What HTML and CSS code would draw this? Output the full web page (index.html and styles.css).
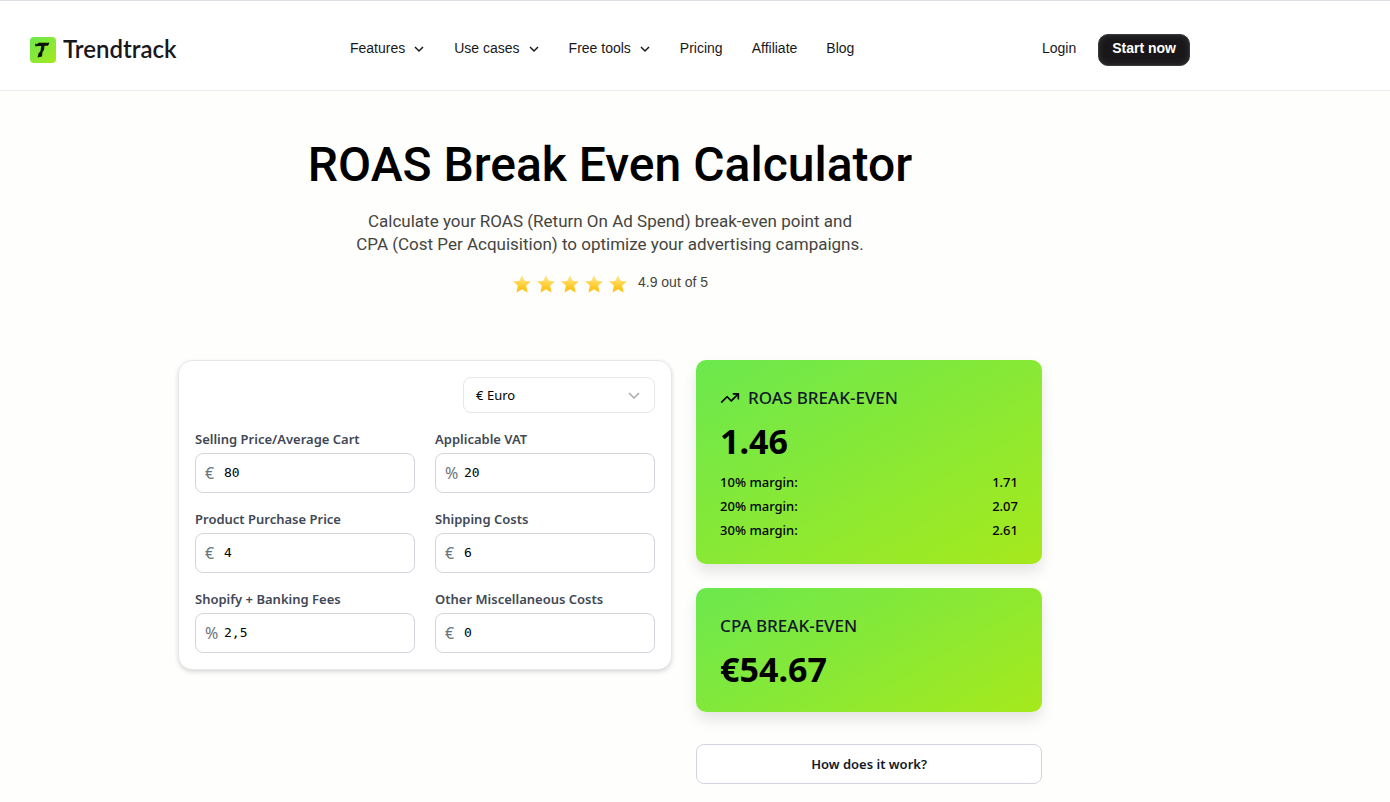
FILE: index.html
```html
<!DOCTYPE html>
<html lang="en">
<head>
  <meta charset="UTF-8" />
  <meta name="viewport" content="width=device-width, initial-scale=1.0" />
  <title>ROAS Break Even Calculator - Trendtrack</title>
  <link rel="stylesheet" href="styles.css">
</head>
<body>
  <header class="site-header">
    <div class="header-inner">
      <a class="logo" href="#">
        <svg width="26" height="26" viewBox="0 0 26 26" aria-hidden="true">
          <defs>
            <linearGradient id="logo-bg" x1="0" y1="0" x2="1" y2="1">
              <stop offset="0" stop-color="#6be84e" />
              <stop offset="1" stop-color="#a6e91c" />
            </linearGradient>
          </defs>
          <rect width="26" height="26" rx="4" fill="url(#logo-bg)" />
          <path d="M5.500 9.500L5 6.500l2 .8 1.500-1.500h11L18 8.800h-3.500L14 13l-1.500 2-.5 4.500L7.500 20.500l1-4 2-2.500.7-5H8z" fill="#0b120b" />
        </svg>
        <span>Trendtrack</span>
      </a>

      <nav class="main-nav">
        <button type="button">Features
          <svg class="chevron" viewBox="0 0 12 6"><path d="M2 1l4 4 4-4" /></svg>
        </button>
        <button type="button">Use cases
          <svg class="chevron" viewBox="0 0 12 6"><path d="M2 1l4 4 4-4" /></svg>
        </button>
        <button type="button">Free tools
          <svg class="chevron" viewBox="0 0 12 6"><path d="M2 1l4 4 4-4" /></svg>
        </button>
        <a href="#">Pricing</a>
        <a href="#">Affiliate</a>
        <a href="#">Blog</a>
      </nav>

      <div class="account">
        <a href="#">Login</a>
        <a class="start-btn" href="#">Start now</a>
      </div>
    </div>
  </header>

  <main class="page">
    <section class="hero">
      <h1>ROAS Break Even Calculator</h1>
      <p class="subtitle">
        Calculate your ROAS (Return On Ad Spend) break-even point and<br>
        CPA (Cost Per Acquisition) to optimize your advertising campaigns.
      </p>
      <div class="rating">
        <svg class="stars" width="116" height="20" viewBox="0 0 116 20" aria-hidden="true">
          <defs>
            <linearGradient id="star-fill" x1="0" y1="0" x2="0" y2="1">
              <stop offset="0" stop-color="#ffe9a0" />
              <stop offset="0.6" stop-color="#ffcd33" />
              <stop offset="1" stop-color="#ffc008" />
            </linearGradient>
            <path id="star" d="M10 1l2.600 5.700 6.200.7-4.600 4.200 1.300 6.900-5.500-3.300-5.500 3.300 1.300-6.900L1.200 7.400l6.200-.7z" fill="url(#star-fill)" />
          </defs>
          <use href="#star" />
          <use href="#star" x="24" />
          <use href="#star" x="48" />
          <use href="#star" x="72" />
          <use href="#star" x="96" />
        </svg>
        <span>4.9 out of 5</span>
      </div>
    </section>

    <div class="calculator">
      <form class="form-card">
        <div class="currency">
          <select id="currency" aria-label="Currency">
            <option>€ Euro</option>
            <option>$ Dollar</option>
            <option>£ Pound</option>
          </select>
          <svg class="chevron" viewBox="0 0 12 6"><path d="M1 1l5 5 5-5" /></svg>
        </div>

        <div class="fields">
          <div class="field">
            <label for="price">Selling Price/Average Cart</label>
            <div class="input-box"><span>€</span><input id="price" type="text" value="80"></div>
          </div>
          <div class="field">
            <label for="vat">Applicable VAT</label>
            <div class="input-box"><span>%</span><input id="vat" type="text" value="20"></div>
          </div>
          <div class="field">
            <label for="purchase">Product Purchase Price</label>
            <div class="input-box"><span>€</span><input id="purchase" type="text" value="4"></div>
          </div>
          <div class="field">
            <label for="shipping">Shipping Costs</label>
            <div class="input-box"><span>€</span><input id="shipping" type="text" value="6"></div>
          </div>
          <div class="field">
            <label for="fees">Shopify + Banking Fees</label>
            <div class="input-box"><span>%</span><input id="fees" type="text" value="2,5"></div>
          </div>
          <div class="field">
            <label for="misc">Other Miscellaneous Costs</label>
            <div class="input-box"><span>€</span><input id="misc" type="text" value="0"></div>
          </div>
        </div>
      </form>

      <div class="results">
        <section class="result-card">
          <h2>
            <svg class="trend" viewBox="0 0 24 24" aria-hidden="true">
              <path d="M22 7l-8.500 8.500-5-5L2 17" />
              <path d="M16 7h6v6" />
            </svg>
            ROAS BREAK-EVEN
          </h2>
          <p class="value">1.46</p>
          <dl class="margins">
            <div><dt>10% margin:</dt><dd>1.71</dd></div>
            <div><dt>20% margin:</dt><dd>2.07</dd></div>
            <div><dt>30% margin:</dt><dd>2.61</dd></div>
          </dl>
        </section>

        <section class="result-card">
          <h2>CPA BREAK-EVEN</h2>
          <p class="value">€54.67</p>
        </section>

        <button class="help-btn" type="button">How does it work?</button>
      </div>
    </div>
  </main>
</body>
</html>
```
FILE: styles.css
```css
* {
  box-sizing: border-box;
}
body {
  margin: 0;
  background: #fefefc;
  color: #000;
  font-family: "Noto Sans", "Open Sans", sans-serif;
  font-size: 14px;
  line-height: 20px;
}
h1, h2, p, dl, dd {
  margin: 0;
}
a {
  color: inherit;
  text-decoration: none;
}
button, input, select {
  font: inherit;
  color: inherit;
}

/* header */
.site-header {
  background: #fff;
  border-top: 1px solid #dcdfe3;
  border-bottom: 1px solid #ececef;
  font-family: "Liberation Sans", Arial, sans-serif;
  color: #18181b;
}
.header-inner {
  display: grid;
  grid-template-columns: 320px 1fr auto;
  align-items: center;
  max-width: 1220px;
  height: 89px;
  padding: 0 30px;
}
.logo {
  display: flex;
  align-items: center;
  gap: 7px;
  padding-top: 8px;
  font-family: Lato, sans-serif;
  font-size: 24px;
  font-weight: 600;
  line-height: 24px;
}
.logo span {
  padding-bottom: 2px;
}
.main-nav {
  display: flex;
  align-items: center;
  gap: 29px;
  padding-top: 4px;
}
.main-nav button {
  display: flex;
  align-items: center;
  gap: 8px;
  padding: 0;
  border: 0;
  background: none;
}
.chevron {
  width: 12px;
  height: 6px;
  fill: none;
  stroke: currentColor;
  stroke-width: 1.5;
  overflow: visible;
}
.main-nav .chevron {
  margin-top: 3px;
}
.account {
  display: flex;
  align-items: baseline;
  gap: 22px;
  padding-top: 8px;
}
.start-btn {
  padding: 3px 13px 7px;
  border: 1px solid #3a3a3c;
  border-radius: 10px;
  background: #19171a;
  box-shadow: inset 0 0 6px #333336;
  color: #fff;
  font-weight: 600;
}

/* hero */
.page {
  max-width: 1220px;
  padding: 44px 30px 18px;
}
.hero {
  display: flex;
  flex-direction: column;
  align-items: center;
  font-family: "Liberation Sans", Arial, sans-serif;
  color: #45453f;
  text-align: center;
}
.hero h1 {
  font-family: Roboto, sans-serif;
  font-size: 48px;
  font-weight: 500;
  line-height: 60px;
  color: #000;
}
.subtitle {
  margin-top: 15px;
  font-family: Roboto, sans-serif;
  font-size: 17px;
  line-height: 23px;
}
.rating {
  display: flex;
  align-items: flex-start;
  gap: 10px;
  margin-top: 16px;
}
.stars {
  margin-top: 2px;
}

/* calculator */
.calculator {
  display: grid;
  grid-template-columns: 10fr 7fr;
  gap: 24px;
  align-items: start;
  max-width: 864px;
  margin: 66px auto 0;
}
.form-card {
  padding: 16px;
  border: 1px solid #e5e7eb;
  border-radius: 14px;
  background: #fff;
  box-shadow: 0 2px 4px rgba(0, 0, 0, 0.15);
}
.currency {
  position: relative;
  width: 192px;
  margin-left: auto;
}
.currency select {
  width: 100%;
  height: 36px;
  padding: 0 12px;
  border: 1px solid #e5e7eb;
  border-radius: 8px;
  background: #fff;
  font-size: 13px;
  appearance: none;
}
.currency .chevron {
  position: absolute;
  top: 15px;
  right: 15px;
  color: #aaa;
  pointer-events: none;
}
.fields {
  display: grid;
  grid-template-columns: 1fr 1fr;
  gap: 16px 20px;
  margin-top: 16px;
}
.field label {
  display: block;
  margin-bottom: 4px;
  font-size: 13px;
  font-weight: 600;
  color: #414855;
}
.input-box {
  display: flex;
  align-items: center;
  height: 40px;
  padding: 0 9px;
  border: 1px solid #d1d5db;
  border-radius: 8px;
  background: #fff;
}
.input-box span {
  flex: 0 0 19px;
  font-size: 16px;
  color: #6b7280;
}
.input-box input {
  width: 100%;
  min-width: 0;
  padding: 0;
  border: 0;
  outline: 0;
  background: none;
  font-family: "DejaVu Sans Mono", monospace;
  font-size: 13px;
}

/* results */
.results {
  display: flex;
  flex-direction: column;
  gap: 24px;
}
.result-card {
  padding: 24px;
  border-radius: 10px;
  background: linear-gradient(150deg, #6be84e, #a6e91c);
  box-shadow: 0 8px 14px rgba(0, 0, 0, 0.1);
}
.result-card h2 {
  display: flex;
  align-items: center;
  gap: 8px;
  font-size: 17px;
  font-weight: 500;
  line-height: 28px;
  color: #111827;
}
.trend {
  width: 20px;
  height: 20px;
  fill: none;
  stroke: #000;
  stroke-width: 2;
  stroke-linecap: round;
  stroke-linejoin: round;
}
.value {
  padding-top: 10px;
  font-size: 34px;
  font-weight: 700;
  line-height: 38px;
}
.margins {
  display: grid;
  gap: 4px;
  margin-top: 12px;
  font-size: 13px;
  font-weight: 500;
}
.margins div {
  display: flex;
  justify-content: space-between;
}
.help-btn {
  height: 40px;
  margin-top: 8px;
  border: 1px solid #d1d5db;
  border-radius: 8px;
  background: #fff;
  font-size: 13px;
  font-weight: 600;
  color: #111827;
}
```
